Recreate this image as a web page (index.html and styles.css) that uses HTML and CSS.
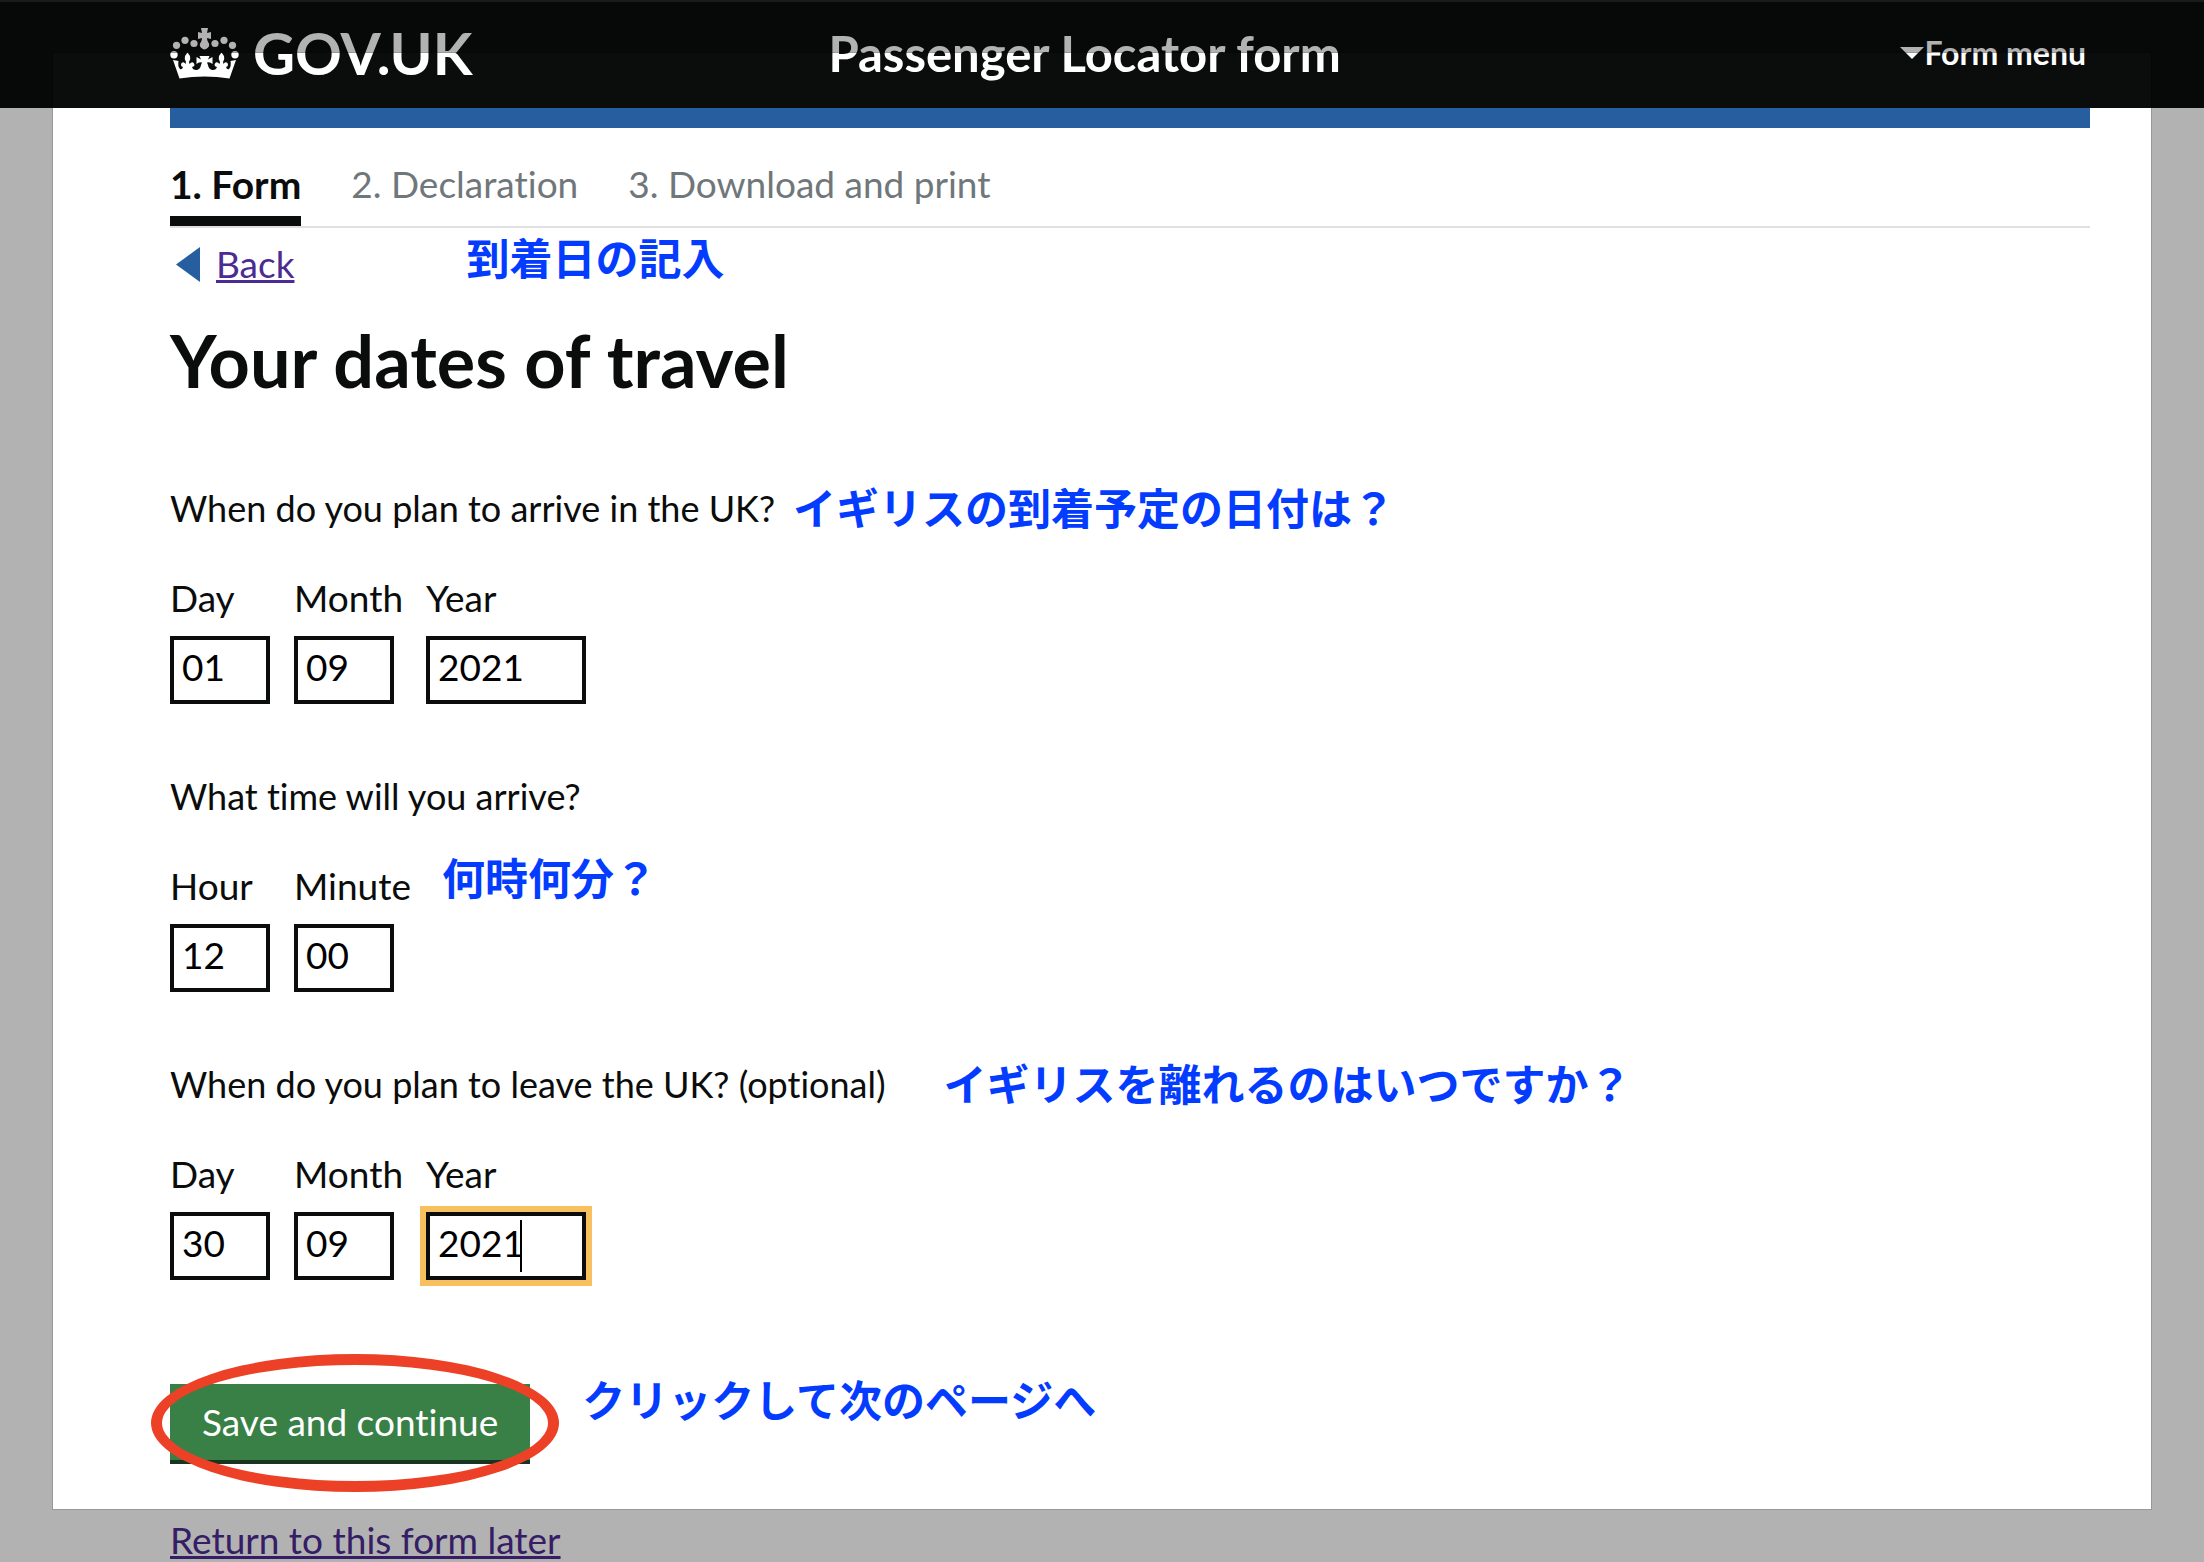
FILE: index.html
```html
<!DOCTYPE html>
<html lang="en">
<head>
    <meta charset="UTF-8">
    <meta name="viewport" content="width=device-width, initial-scale=1.0">
    <title>Your dates of travel - Passenger Locator form</title>
    <link rel="stylesheet" href="styles.css">
</head>
<body>
    <header class="header">
        <a class="logo" href="#">
            <svg class="crown" viewBox="0 0 69 51" aria-hidden="true">
                <path d="M31 0h7l-1 5 4-1v7l-4-1q0 2 1 4a4.500 4.500 0 1 1-7 0q1-2 1-4l-4 1V4l4 1z"/>
                <circle cx="24" cy="15.500" r="3.600"/>
                <circle cx="15" cy="12.300" r="3.600"/>
                <circle cx="6.500" cy="17.300" r="3.600"/>
                <circle cx="4" cy="26.700" r="3.700"/>
                <circle cx="45" cy="15.500" r="3.600"/>
                <circle cx="54" cy="12.300" r="3.600"/>
                <circle cx="62.500" cy="17.300" r="3.600"/>
                <circle cx="65" cy="26.700" r="3.700"/>
                <path d="M3 32L9.500 50.500Q34.500 46.500 59.500 50.500L66 32L60.500 33Q61.500 38 59 41Q57 42 56 39Q59 38 57.500 35Q55 33 53.500 36L53 34Q55 31 54 28L51.500 24.500L49 28Q48 31 50 34L49.500 36Q47 33 45 35.500Q43.500 38 47 39Q46 42.500 42 42Q38.500 41 38 37L37 34.500Q40 33.500 42.500 36V29L38 31.500L39.500 28H29.500L31 31.500L26.500 29V36Q29 33.500 32 34.500L31 37Q30.500 41 27 42Q23 42.500 22 39Q25.500 38 24 35.500Q22 33 19.500 36L19 34Q21 31 20 28L17.500 24.500L15 28Q14 31 16 34L15.500 36Q14 33 11.500 35Q10 38 13 39Q12 42 10 41Q7.500 38 8.500 33Z"/>
            </svg>
            <span>GOV.UK</span>
        </a>
        <p class="service-name">Passenger Locator form</p>
        <button class="menu-button" type="button">
            <svg class="menu-arrow" viewBox="0 0 24 12" aria-hidden="true"><path d="M0 0h24L12 12z"/></svg>Form menu
        </button>
    </header>

    <main class="container">
        <ol class="steps">
            <li class="step step-current">1. Form</li>
            <li class="step">2. Declaration</li>
            <li class="step">3. Download and print</li>
        </ol>

        <div class="back-row">
            <a class="back" href="#">
                <svg class="back-arrow" viewBox="0 0 24 35" aria-hidden="true"><path d="M24 0v35L0 17.500z"/></svg>
                <span>Back</span>
            </a>
            <p class="note" lang="ja">到着日の記入</p>
        </div>

        <h1>Your dates of travel</h1>

        <form>
            <section class="group">
                <div class="question">
                    <h2>When do you plan to arrive in the UK?</h2>
                    <p class="note" lang="ja">イギリスの到着予定の日付は？</p>
                </div>
                <div class="fields">
                    <div class="field">
                        <label for="arrive-day">Day</label>
                        <input id="arrive-day" type="text" inputmode="numeric" value="01">
                    </div>
                    <div class="field">
                        <label for="arrive-month">Month</label>
                        <input id="arrive-month" type="text" inputmode="numeric" value="09">
                    </div>
                    <div class="field field-year">
                        <label for="arrive-year">Year</label>
                        <input id="arrive-year" type="text" inputmode="numeric" value="2021">
                    </div>
                </div>
            </section>

            <section class="group">
                <div class="question">
                    <h2>What time will you arrive?</h2>
                </div>
                <div class="fields fields-time">
                    <div class="field">
                        <label for="arrive-hour">Hour</label>
                        <input id="arrive-hour" type="text" inputmode="numeric" value="12">
                    </div>
                    <div class="field">
                        <label for="arrive-minute">Minute</label>
                        <input id="arrive-minute" type="text" inputmode="numeric" value="00">
                    </div>
                    <p class="note" lang="ja">何時何分？</p>
                </div>
            </section>

            <section class="group">
                <div class="question question-optional">
                    <h2>When do you plan to leave the UK? (optional)</h2>
                    <p class="note" lang="ja">イギリスを離れるのはいつですか？</p>
                </div>
                <div class="fields">
                    <div class="field">
                        <label for="leave-day">Day</label>
                        <input id="leave-day" type="text" inputmode="numeric" value="30">
                    </div>
                    <div class="field">
                        <label for="leave-month">Month</label>
                        <input id="leave-month" type="text" inputmode="numeric" value="09">
                    </div>
                    <div class="field field-year">
                        <label for="leave-year">Year</label>
                        <input class="focused" id="leave-year" type="text" inputmode="numeric" value="2021">
                        <span class="caret"></span>
                    </div>
                </div>
            </section>

            <div class="actions">
                <div class="submit">
                    <button class="save-button" type="submit">Save and continue</button>
                    <span class="circle"></span>
                </div>
                <p class="note" lang="ja">クリックして次のページへ</p>
            </div>
        </form>

        <a class="return-link" href="#">Return to this form later</a>
    </main>

    <div class="spotlight"></div>
</body>
</html>
```
FILE: styles.css
```css
* {
    box-sizing: border-box;
}
body {
    margin: 0;
    background-color: #fff;
    color: #0b0c0c;
    font-family: Lato, "Noto Sans CJK JP", sans-serif;
    font-size: 37px;
    line-height: 48px;
    font-variant-ligatures: none;
}
h1, h2, p, ol {
    margin: 0;
    padding: 0;
}
input, button {
    font: inherit;
    font-variant-ligatures: none;
}
svg {
    display: block;
    fill: currentColor;
}

/* Header */
.header {
    display: flex;
    align-items: center;
    height: 108px;
    padding: 0 118px 4px 170px;
    border-top: 2px solid #282828;
    background-color: #0b0c0c;
    color: #fff;
}
.logo {
    display: flex;
    align-items: center;
    gap: 14px;
    color: #fff;
    font-size: 58px;
    font-weight: 700;
    text-decoration: none;
}
.crown {
    width: 69px;
    height: 51px;
}
.service-name {
    margin-left: 356px;
    font-size: 49px;
    font-weight: 700;
}
.menu-button {
    display: flex;
    align-items: center;
    margin-left: auto;
    padding: 0;
    border: none;
    background: none;
    color: #fff;
    font-size: 32px;
    font-weight: 700;
    cursor: pointer;
}
.menu-arrow {
    width: 24px;
    height: 12px;
}

/* Page */
.container {
    margin: 0 114px 0 170px;
    border-top: 20px solid #265e9f;
}
.steps {
    display: flex;
    gap: 50px;
    padding-top: 34px;
    border-bottom: 2px solid #dee0e2;
    list-style: none;
}
.step {
    padding-bottom: 10px;
    border-bottom: 10px solid transparent;
    color: #6f777b;
    line-height: 44px;
}
.step-current {
    border-color: #0b0c0c;
    color: #0b0c0c;
    font-size: 39px;
    font-weight: 700;
}
.back-row {
    display: flex;
    align-items: flex-start;
    gap: 172px;
    padding-top: 14px;
}
.back {
    display: flex;
    align-items: center;
    gap: 16px;
    padding-left: 6px;
    color: #4c2c92;
    line-height: 44px;
}
.back-arrow {
    width: 24px;
    height: 35px;
    color: #265e9f;
}
.note {
    padding-bottom: 4px;
    color: #043cff;
    font-family: "Noto Sans CJK JP", sans-serif;
    font-size: 43px;
    font-weight: 700;
    line-height: 28px;
    white-space: nowrap;
}
h1 {
    margin: 34px 0 84px;
    font-size: 72px;
    line-height: 80px;
}

/* Form */
.group {
    margin-bottom: 68px;
}
.question {
    display: flex;
    align-items: center;
    gap: 18px;
    margin-bottom: 42px;
}
.question-optional {
    gap: 58px;
}
h2 {
    font-size: 36px;
    font-weight: 400;
}
.fields {
    display: grid;
    grid-template-columns: 100px 108px 160px;
    gap: 24px;
}
.fields-time {
    grid-template-columns: 100px 124px auto;
    justify-content: start;
}
.field {
    position: relative;
}
.field label {
    display: block;
    margin-bottom: 14px;
}
.field input {
    display: block;
    width: 100px;
    height: 68px;
    padding: 0 8px 8px;
    border: 4px solid #0b0c0c;
    border-radius: 0;
    background-color: #fff;
    color: #000;
}
.field-year input {
    width: 160px;
}
.field input:focus, .field .focused {
    outline: 6px solid #f8c15f;
}
.caret {
    position: absolute;
    right: 64px;
    bottom: 8px;
    width: 2px;
    height: 52px;
    background-color: #000;
}
.actions {
    display: flex;
    align-items: flex-start;
    gap: 52px;
    padding-top: 36px;
}
.submit {
    position: relative;
}
.save-button {
    display: block;
    height: 76px;
    padding: 0 32px;
    border: none;
    background-color: #388045;
    box-shadow: 0 4px 0 #18351f;
    color: #fff;
    cursor: pointer;
}
.circle {
    position: absolute;
    inset: -30px -29px -32px -19px;
    border: 11px solid #ec4127;
    border-radius: 50%;
    pointer-events: none;
}
.return-link {
    display: inline-block;
    margin-top: 58px;
    color: #4c2c92;
    line-height: 44px;
    vertical-align: top;
}

/* Selected area, everything outside it is dimmed */
.spotlight {
    position: fixed;
    inset: 53px;
    box-shadow: 0 0 0 1px rgba(0, 0, 0, 0.15), 0 0 0 9999px rgba(0, 0, 0, 0.3);
    pointer-events: none;
}
```
